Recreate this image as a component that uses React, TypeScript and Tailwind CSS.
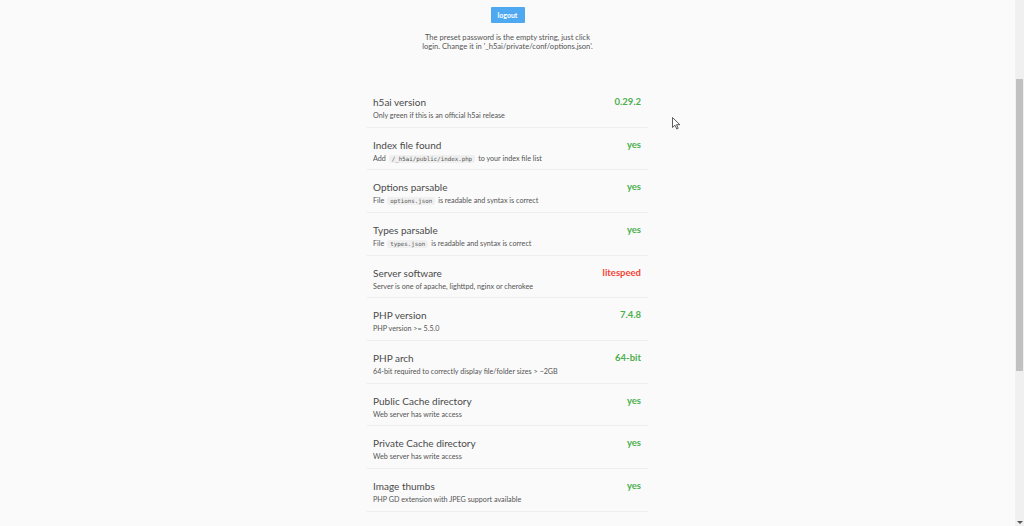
import React from "react";

type Row = { title: string; desc: React.ReactNode; value: string; ok: boolean };

const Code = ({ children }: { children: React.ReactNode }) => (
  <code className="mx-[3px] rounded-[2px] bg-[#f0f0f0] px-[3px] py-[1px] font-['DejaVu_Sans_Mono',monospace] text-[5.8px] text-[#555]">
    {children}
  </code>
);

const rows: Row[] = [
  { title: "h5ai version", desc: "Only green if this is an official h5ai release", value: "0.29.2", ok: true },
  { title: "Index file found", desc: <>Add<Code>/_h5ai/public/index.php</Code>to your index file list</>, value: "yes", ok: true },
  { title: "Options parsable", desc: <>File<Code>options.json</Code>is readable and syntax is correct</>, value: "yes", ok: true },
  { title: "Types parsable", desc: <>File<Code>types.json</Code>is readable and syntax is correct</>, value: "yes", ok: true },
  { title: "Server software", desc: "Server is one of apache, lighttpd, nginx or cherokee", value: "litespeed", ok: false },
  { title: "PHP version", desc: "PHP version >= 5.5.0", value: "7.4.8", ok: true },
  { title: "PHP arch", desc: "64-bit required to correctly display file/folder sizes > ~2GB", value: "64-bit", ok: true },
  { title: "Public Cache directory", desc: "Web server has write access", value: "yes", ok: true },
  { title: "Private Cache directory", desc: "Web server has write access", value: "yes", ok: true },
  { title: "Image thumbs", desc: "PHP GD extension with JPEG support available", value: "yes", ok: true },
  { title: "Use EXIF thumbs", desc: "PHP EXIF extension available", value: "yes", ok: true },
];

export default function App() {
  return (
    <div className="flex h-[526px] overflow-hidden bg-[#fafafa] font-['Lato',sans-serif] text-[#555]">
      <main className="relative flex-1 overflow-hidden">
        <div className="flex flex-col items-center pt-[7px]">
          <button className="h-[16px] w-[34px] rounded-[1px] bg-[#4ea9f0] text-[7px] font-bold leading-[16px] text-white">
            logout
          </button>
          <p className="mt-[10px] whitespace-nowrap text-center text-[7.6px] leading-[9px] text-[#555]">
            The preset password is the empty string, just click
            <br />
            login. Change it in '_h5ai/private/conf/options.json'.
          </p>
        </div>
        <div className="mx-auto mt-[34px] w-[281px]">
          {rows.map((r, i) => (
            <div key={i} className="flex h-[42.67px] items-start justify-between border-b border-[#eeeeee] pl-[6px] pr-[7px] pt-[11px]">
              <div>
                <div className="text-[10px] leading-[12px] text-[#4a4a4a]">{r.title}</div>
                <div className="mt-[3px] whitespace-nowrap text-[7.2px] leading-[10px] text-[#555]">{r.desc}</div>
              </div>
              <div className={`text-[9.5px] font-bold leading-[12px] ${r.ok ? "text-[#4caf50]" : "text-[#f44336]"}`}>{r.value}</div>
            </div>
          ))}
        </div>
        <svg className="pointer-events-none absolute left-[672px] top-[117px]" width="9" height="13" viewBox="0 0 9 13">
          <path d="M0.5 0.5 L0.5 10.5 L3 8.2 L4.8 12 L6.2 11.3 L4.5 7.7 L7.8 7.7 Z" fill="#fff" stroke="#333" strokeWidth="0.8" />
        </svg>
      </main>
      <aside className="flex w-[9px] flex-col bg-[#f0f0f0]">
        <div className="h-[79px]" />
        <div className="mx-[1px] h-[292px] bg-[#c1c1c1]" />
        <div className="flex-1" />
        <div className="flex h-[8px] items-center justify-center">
          <div className="h-0 w-0 border-x-[3px] border-t-[3px] border-x-transparent border-t-[#555]" />
        </div>
      </aside>
    </div>
  );
}
